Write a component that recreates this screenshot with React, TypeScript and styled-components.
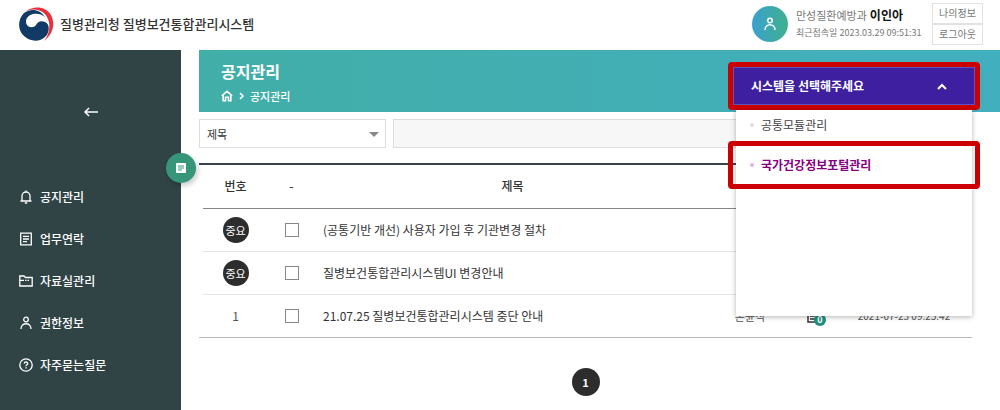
import React from "react";
import styled, { createGlobalStyle, css } from "styled-components";

const GlobalStyle = createGlobalStyle`
  *, *::before, *::after { box-sizing: border-box; }
  body {
    margin: 0;
    background: #fff;
    color: #333;
    font-family: "Noto Sans CJK KR", "Noto Sans", sans-serif;
    font-size: 12px;
    line-height: 18px;
  }
  button, input, select { font: inherit; color: inherit; margin: 0; }
  a { color: inherit; text-decoration: none; }
  ul { list-style: none; margin: 0; padding: 0; }
`;

const Page = styled.div`
  display: flex;
  flex-direction: column;
  min-height: 100vh;
`;

const TopBar = styled.header`
  display: flex;
  align-items: center;
  justify-content: space-between;
  height: 50px;
  padding: 0 17px 3px 18px;
`;

const Brand = styled.a`
  display: flex;
  align-items: center;
  gap: 6px;
  font-size: 13px;
  font-weight: 500;
`;

const Account = styled.div`
  display: flex;
  align-items: center;
  gap: 8px;
`;

const Avatar = styled.span`
  display: grid;
  place-items: center;
  width: 36px;
  height: 36px;
  border-radius: 50%;
  color: #fff;
  background: linear-gradient(90deg, #3ba0d0, #40b08c);
`;

const AccountText = styled.div`
  display: flex;
  flex-direction: column;
  min-width: 128px;
  color: #777;
  font-size: 11px;
  line-height: 17px;

  strong {
    margin-left: 3px;
    color: #111;
    font-size: 12px;
  }
  small { font-size: 9px; }
`;

const AccountButtons = styled.div`
  display: flex;
  flex-direction: column;
`;

const SmallButton = styled.button`
  width: 51px;
  height: 21px;
  padding: 0;
  border: 1px solid #e2e2e2;
  background: #fff;
  color: #777;
  font-size: 10px;
  line-height: 18px;
`;

const Body = styled.div`
  display: flex;
  flex: 1;
`;

const Sidebar = styled.aside`
  position: relative;
  flex: 0 0 181px;
  background: #304345;
  color: #fff;
`;

const BackButton = styled.button`
  display: grid;
  place-items: center;
  width: 100%;
  height: 126px;
  padding: 0 0 2px;
  border: 0;
  background: none;
`;

const NavLink = styled.a`
  display: flex;
  align-items: center;
  gap: 7px;
  height: 42px;
  padding-left: 19px;
  font-weight: 500;
`;

const SideToggle = styled.button`
  position: absolute;
  top: 103px;
  right: -15px;
  display: grid;
  place-items: center;
  width: 30px;
  height: 30px;
  padding: 0;
  border: 0;
  border-radius: 50%;
  background: #37967a;
  box-shadow: 2px 3px 5px rgba(0, 0, 0, 0.2);
`;

const Main = styled.main`
  position: relative;
  flex: 1;
  min-width: 0;
  padding-left: 18px;
`;

const Banner = styled.div`
  height: 62px;
  padding: 9px 22px;
  background: linear-gradient(90deg, #42aea8, #42afbf);
  color: #fff;
`;

const Title = styled.h1`
  margin: 0;
  font-size: 16px;
  line-height: 24px;
`;

const Crumbs = styled.nav`
  display: flex;
  align-items: center;
  gap: 5px;
  margin-top: 4px;
  font-size: 11px;
  font-weight: 500;

  a { display: flex; }
`;

const Content = styled.div`
  padding: 7px 28px 0 0;
`;

const SearchRow = styled.form`
  display: flex;
  gap: 7px;
`;

const SelectBox = styled.div`
  position: relative;
  flex: 0 0 187px;

  svg {
    position: absolute;
    top: 13px;
    right: 7px;
    pointer-events: none;
  }
`;

const fieldStyle = css`
  height: 29px;
  border: 1px solid #ddd;
  border-radius: 0;
  font-size: 11px;
`;

const Select = styled.select`
  ${fieldStyle}
  appearance: none;
  display: block;
  width: 100%;
  padding: 0 7px;
  background: #fff;
`;

const SearchInput = styled.input`
  ${fieldStyle}
  flex: 1;
  min-width: 0;
  padding: 0 8px;
  background: #f7f7f7;
`;

const TableFrame = styled.div`
  margin-top: 15px;
  padding-left: 4px;
  border-top: 2px solid #3a4250;
  border-bottom: 1px solid #bbb;
`;

const Table = styled.table`
  width: 100%;
  table-layout: fixed;
  border-collapse: collapse;
`;

const HeadCell = styled.th<{ $w?: number; $indent?: boolean }>`
  width: ${(p) => (p.$w ? `${p.$w}px` : "auto")};
  height: 43px;
  padding: 0 0 0 ${(p) => (p.$indent ? 8 : 0)}px;
  border-bottom: 1px solid #85858c;
  font-weight: 500;
`;

const Row = styled.tr`
  & + & td { border-top: 1px solid #e5e5e5; }
`;

const Cell = styled.td<{ $left?: boolean; $size?: number }>`
  height: 43px;
  padding: 1px 0 0 ${(p) => (p.$left ? 8 : 0)}px;
  text-align: ${(p) => (p.$left ? "left" : "center")};
  font-size: ${(p) => p.$size ?? 12}px;
  color: ${(p) => (p.$left ? "#333" : "#555")};
  white-space: nowrap;
`;

const Important = styled.span`
  display: inline-grid;
  place-items: center;
  width: 26px;
  height: 26px;
  border-radius: 50%;
  background: #2d2d2d;
  color: #fff;
  font-size: 11px;
  vertical-align: middle;
`;

const Check = styled.input`
  appearance: none;
  display: block;
  width: 14px;
  height: 14px;
  margin: 0 auto;
  border: 1px solid #888;
  background: #fff;
`;

const FileMark = styled.span`
  position: relative;
  display: inline-block;
  width: 20px;
  height: 14px;
  color: #333;
  vertical-align: middle;

  svg { display: block; }
`;

const FileCount = styled.span`
  position: absolute;
  right: 1px;
  bottom: -1px;
  width: 12px;
  height: 12px;
  border-radius: 50%;
  background: #209080;
  color: #fff;
  font-size: 9px;
  font-weight: 700;
  line-height: 12px;
`;

const Pager = styled.nav`
  display: flex;
  justify-content: center;
  padding: 30px 0 12px;
`;

const PageButton = styled.button`
  width: 28px;
  height: 28px;
  padding: 0;
  border: 0;
  border-radius: 50%;
  background: #2d2d2d;
  color: #fff;
  font-size: 11px;
  font-weight: 700;
`;

const SystemMenu = styled.div`
  position: absolute;
  top: 12px;
  right: 20px;
  width: 252px;
`;

const outline = css`
  border: 5px solid #cc0000;
  border-radius: 4px;
`;

const SystemButton = styled.button`
  ${outline}
  display: flex;
  align-items: center;
  justify-content: space-between;
  width: 100%;
  height: 48px;
  padding: 0 28px 0 18px;
  background: #3d1f9f;
  box-shadow: inset 0 0 0 1px #5a55bf;
  color: #fff;
  font-weight: 700;
`;

const SystemList = styled.ul`
  height: 206px;
  margin: 0 8px;
  background: #fff;
  box-shadow: 0 1px 5px rgba(0, 0, 0, 0.3);
`;

const SystemItem = styled.li<{ $active?: boolean }>`
  display: flex;
  align-items: center;
  height: 31px;
  padding: 0 0 1px 14px;
  color: #444;

  &::before {
    content: "";
    width: 4px;
    height: 4px;
    margin-right: 7px;
    border-radius: 50%;
    background: #ddd;
  }

  ${(p) =>
    p.$active &&
    css`
      ${outline}
      height: 48px;
      margin: 0 -8px;
      padding: 0 0 0 17px;
      color: #850080;
      font-weight: 700;
      &::before { background: #dfb4de; }
    `}
`;

const Icon = ({ size = 14, w = 1.5, children }: { size?: number; w?: number; children: React.ReactNode }) => (
  <svg width={size} height={size} viewBox="0 0 14 14" fill="none" stroke="currentColor" strokeWidth={w} aria-hidden="true">
    {children}
  </svg>
);

const Logo = () => (
  <svg width="36" height="36" viewBox="0 0 36 36" aria-hidden="true">
    <path fill="#e8303a" d="M7 6C15-1 28 0 33 9C38 19 34 29 26 35C32 27 33 18 29 11C25 4 16 1 7 6Z" />
    <path fill="#123a66" d="M6 7C-1 14 0 25 6 30C12 36 22 36 27 31C32 26 32 18 27 16C22 14 19 17 18 19C16 22 11 22 9 19C6 14 10 9 15 8C19 7 24 8 27 11C22 3 13 2 6 7Z" />
  </svg>
);

const person = (
  <>
    <circle cx="7" cy="3.500" r="2.300" />
    <path d="M2 13C2 6 12 6 12 13" />
  </>
);

const NAV = [
  { label: "공지관리", icon: <path d="M1.500 11H12.500M3 11V6A4 4 0 0 1 11 6V11M7 .5V2M5.800 13H8.200" /> },
  { label: "업무연락", icon: <path d="M1.700 1.200H12.300V12.800H1.700ZM4 4.300H10M4 7H10M4 9.700H8" /> },
  { label: "자료실관리", icon: <path d="M.8 2H5L6.500 3.500H13.200V12H.8ZM1 6.300H5M6 6.300H7.500M8.500 6.300H10" /> },
  { label: "권한정보", icon: person },
  {
    label: "자주묻는질문",
    icon: (
      <>
        <circle cx="7" cy="7" r="6.200" />
        <path d="M5.200 5.600C5.300 3.400 8.800 3.500 8.700 5.600C8.600 6.700 7 6.800 7 8.200M7 9.300V10.500" />
      </>
    ),
  },
];

const ROWS = [
  { no: null, title: "(공통기반 개선) 사용자 가입 후 기관변경 절차" },
  { no: null, title: "질병보건통합관리시스템UI 변경안내" },
  { no: 1, title: "21.07.25 질병보건통합관리시스템 중단 안내", author: "손윤식", files: 0, date: "2021-07-23 09:25:42" },
];

export default function App() {
  return (
    <Page>
      <GlobalStyle />
      <TopBar>
        <Brand href="#">
          <Logo />
          질병관리청 질병보건통합관리시스템
        </Brand>
        <Account>
          <Avatar>
            <Icon>{person}</Icon>
          </Avatar>
          <AccountText>
            <span>
              만성질환예방과<strong>이인아</strong>
            </span>
            <small>최근접속일 2023.03.29 09:51:31</small>
          </AccountText>
          <AccountButtons>
            <SmallButton type="button">나의정보</SmallButton>
            <SmallButton type="button">로그아웃</SmallButton>
          </AccountButtons>
        </Account>
      </TopBar>
      <Body>
        <Sidebar>
          <BackButton type="button" aria-label="뒤로">
            <Icon>
              <path d="M14 7H1M5 3L1 7L5 11" />
            </Icon>
          </BackButton>
          <nav>
            {NAV.map((n) => (
              <NavLink href="#" key={n.label}>
                <Icon w={1.3}>{n.icon}</Icon>
                {n.label}
              </NavLink>
            ))}
          </nav>
          <SideToggle type="button" aria-label="메뉴">
            <svg width="10" height="10" viewBox="0 0 10 10" aria-hidden="true">
              <rect width="10" height="10" rx="1" fill="#fff" />
              <path d="M2 3H8M2 5H8M2 7H6" stroke="#37967a" />
            </svg>
          </SideToggle>
        </Sidebar>
        <Main>
          <Banner>
            <Title>공지관리</Title>
            <Crumbs>
              <a href="#" aria-label="홈">
                <Icon size={12} w={1.8}>
                  <path d="M1 6.800L7 1.500L13 6.800M2.500 6V12.500H5.300V8.500H8.700V12.500H11.500V6" />
                </Icon>
              </a>
              <svg width="7" height="8" viewBox="0 0 7 8" fill="none" stroke="#fff" strokeWidth="1.500" aria-hidden="true">
                <path d="M2 1L5 4L2 7" />
              </svg>
              <span>공지관리</span>
            </Crumbs>
          </Banner>
          <Content>
            <SearchRow>
              <SelectBox>
                <Select aria-label="검색 조건">
                  <option>제목</option>
                </Select>
                <svg width="10" height="5" viewBox="0 0 10 5" aria-hidden="true">
                  <path d="M0 0H10L5 5Z" fill="#888" />
                </svg>
              </SelectBox>
              <SearchInput type="text" aria-label="검색어" />
            </SearchRow>
            <TableFrame>
              <Table>
                <thead>
                  <tr>
                    <HeadCell $w={65}>번호</HeadCell>
                    <HeadCell $w={47}>-</HeadCell>
                    <HeadCell $indent>제목</HeadCell>
                    <HeadCell $w={96} />
                    <HeadCell $w={38} />
                    <HeadCell $w={136} />
                  </tr>
                </thead>
                <tbody>
                  {ROWS.map((r) => (
                    <Row key={r.title}>
                      <Cell>{r.no ?? <Important>중요</Important>}</Cell>
                      <Cell>
                        <Check type="checkbox" aria-label={r.title} />
                      </Cell>
                      <Cell $left>{r.title}</Cell>
                      <Cell $size={11}>{r.author}</Cell>
                      <Cell>
                        {r.files !== undefined && (
                          <FileMark>
                            <Icon>
                              <path d="M1 2H10V11H1ZM3 5H8M3 8H8" />
                            </Icon>
                            <FileCount>{r.files}</FileCount>
                          </FileMark>
                        )}
                      </Cell>
                      <Cell $size={10}>{r.date}</Cell>
                    </Row>
                  ))}
                </tbody>
              </Table>
            </TableFrame>
            <Pager>
              <PageButton type="button">1</PageButton>
            </Pager>
          </Content>
          <SystemMenu>
            <SystemButton type="button" aria-expanded="true">
              시스템을 선택해주세요
              <svg width="10" height="7" viewBox="0 0 10 7" fill="none" stroke="#fff" strokeWidth="2" aria-hidden="true">
                <path d="M1 6L5 2L9 6" />
              </svg>
            </SystemButton>
            <SystemList>
              <SystemItem>
                <a href="#">공통모듈관리</a>
              </SystemItem>
              <SystemItem $active>
                <a href="#">국가건강정보포털관리</a>
              </SystemItem>
            </SystemList>
          </SystemMenu>
        </Main>
      </Body>
    </Page>
  );
}
